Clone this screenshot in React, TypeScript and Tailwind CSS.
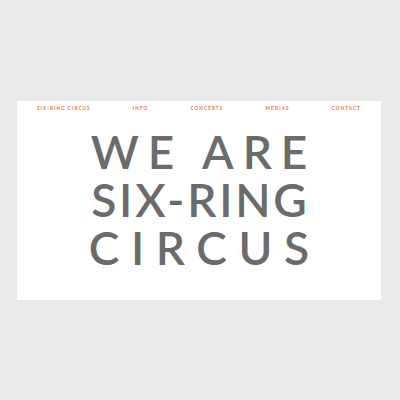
export default function App() {
  return (
    <div className="w-[400px] h-[400px] bg-[#e9e9e9] pt-[101px] pl-[17px]" style={{ fontFamily: "Lato, 'Open Sans', sans-serif" }}>
      <div className="w-[364px] h-[199px] bg-white flex flex-col">
        <nav className="flex items-center justify-between h-[13px] px-[20px] pt-[1px] text-[4.6px] font-bold tracking-[0.24em] text-[#ee6e47]">
          <span>SIX-RING CIRCUS</span>
          <span>INFO</span>
          <span>CONCERTS</span>
          <span>MEDIAS</span>
          <span>CONTACT</span>
        </nav>
        <h1 className="mt-[14px] flex flex-col items-center text-[46px] leading-[48px] font-semibold text-[#6b6b6b]">
          <div className="tracking-[9px] mr-[-9px]">WE ARE</div>
          <div className="tracking-[2.8px] mr-[-2.8px]">SIX-RING</div>
          <div className="tracking-[11.6px] mr-[-11.6px]">CIRCUS</div>
        </h1>
      </div>
    </div>
  );
}
